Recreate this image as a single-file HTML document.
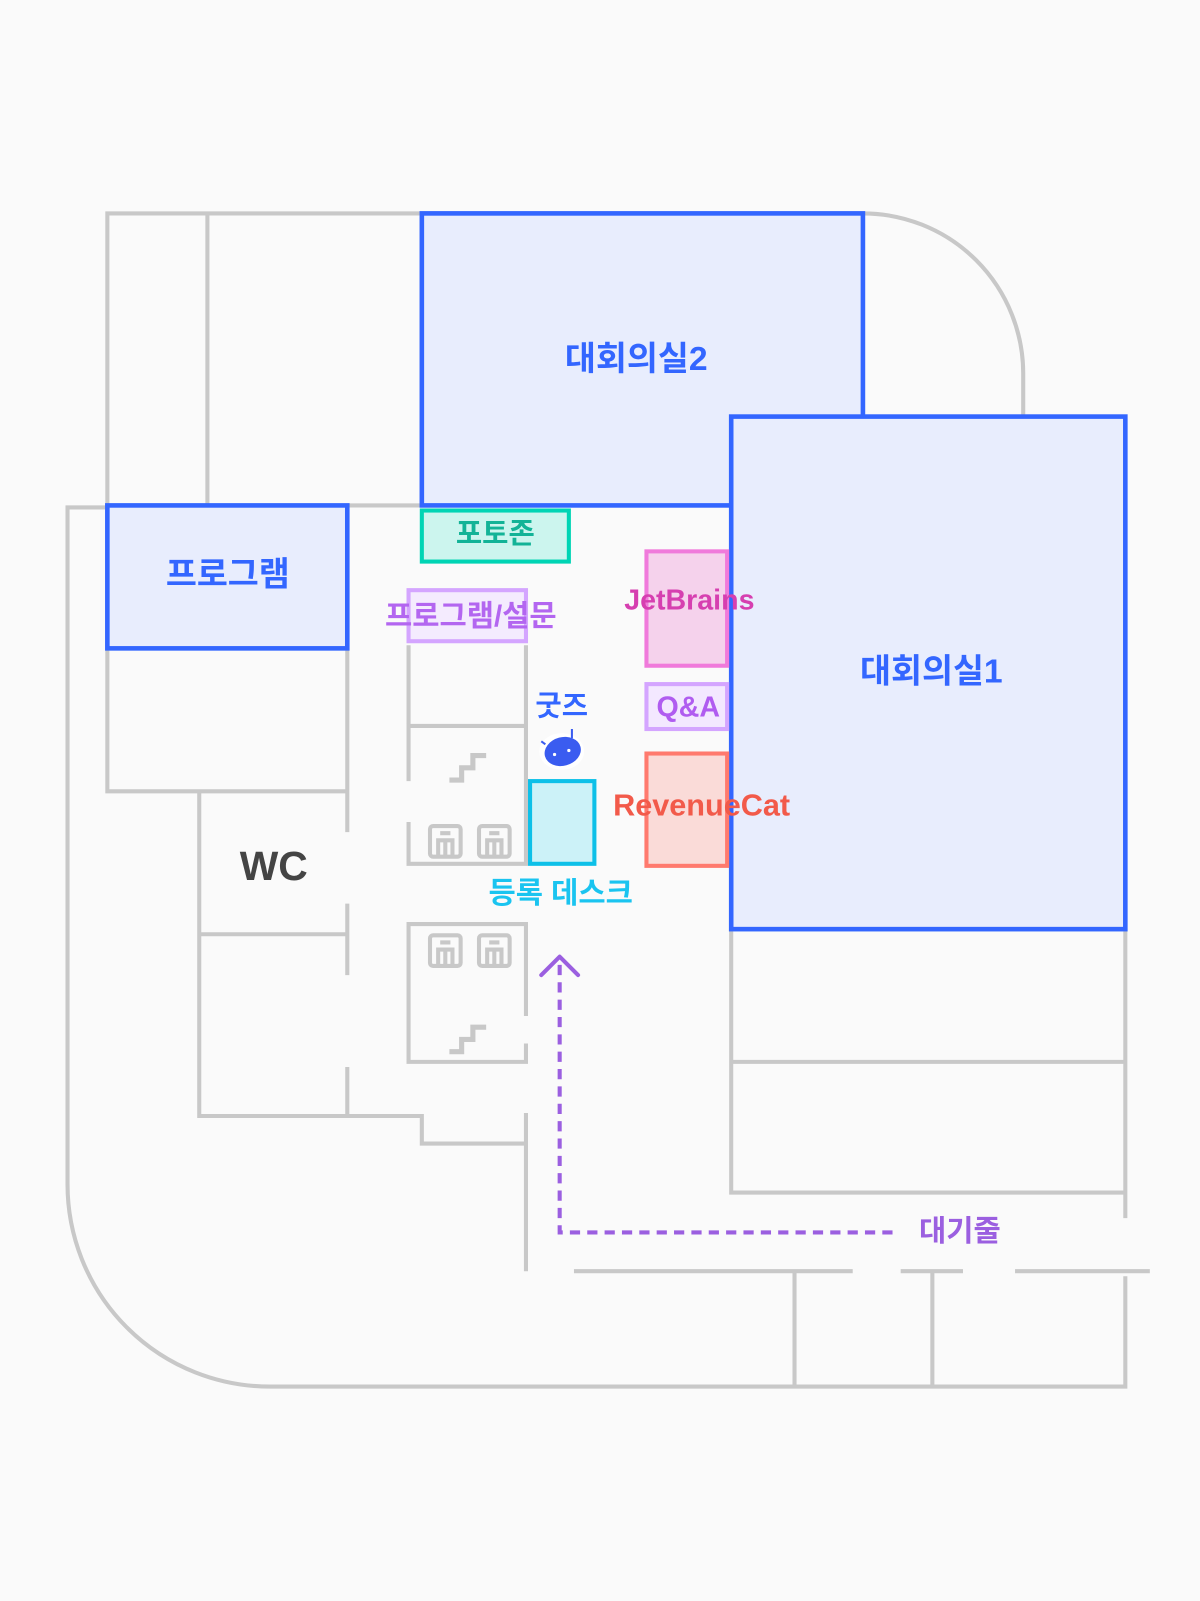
<!DOCTYPE html>
<html><head><meta charset="utf-8"><style>
html,body{margin:0;padding:0;background:#FAFAFA;}
svg{display:block}
text{font-family:"Liberation Sans","Noto Sans CJK KR",sans-serif;font-weight:bold;text-anchor:middle;dominant-baseline:central}
</style></head><body>
<svg width="1200" height="1601" viewBox="0 0 1175 1568" xmlns="http://www.w3.org/2000/svg">
<rect width="1175" height="1568" fill="#FAFAFA"/>
<g fill="none" stroke="#C8C8C8" stroke-width="4">
<path d="M105 495 V209 H845 A157 157 0 0 1 1002 366 V408"/>
<path d="M203 209 V495"/>
<path d="M105 497 H66 V1160 A198 198 0 0 0 264 1358 H1102 V1250"/>
<path d="M340 495 H413"/>
<path d="M105 635 V775 H340"/>
<path d="M340 635 V815 M340 885 V955 M340 1045 V1093"/>
<path d="M195 775 V1093 H413 V1120 H515 M195 915 H340"/>
<path d="M515 1090 V1245"/>
<path d="M400 632 V765 M400 805 V846 H515 V632 M400 711 H515"/>
<path d="M515 995 V905 H400 V1040 H515 V1022"/>
<path d="M716 910 V1168 H1102 M716 1040 H1102 M1102 910 V1193"/>
<path d="M562 1245 H835 M882 1245 H943 M994 1245 H1126"/>
<path d="M778 1245 V1358 M913 1245 V1358"/>
<path d="M440 764 H452 V752 H463 V740 H476" stroke-width="5"/>
<path d="M440 1030 H452 V1018 H463 V1006 H476" stroke-width="5"/>
</g>
<g fill="none" stroke="#C8C8C8" stroke-width="4">
<g id="el"><rect x="421" y="809" width="30" height="30" rx="3"/><path d="M429 839 V823 H443 V839 M436 823 V839 M431 816 H441"/></g>
<use href="#el" x="48"/>
<use href="#el" x="0" y="107"/>
<use href="#el" x="48" y="107"/>
</g>
<rect x="413" y="209" width="432" height="286" fill="#E8EDFD" stroke="#3366FF" stroke-width="4.5"/>
<rect x="716" y="408" width="386" height="502" fill="#E8EDFD" stroke="#3366FF" stroke-width="4.5"/>
<rect x="105" y="495" width="235" height="140" fill="#E8EDFD" stroke="#3366FF" stroke-width="4.5"/>
<rect x="413" y="500" width="144" height="50" fill="#CCF5EE" stroke="#00D4B4" stroke-width="4"/>
<rect x="400" y="578" width="115" height="50" fill="#F4EBFE" stroke="#D4A5FF" stroke-width="4"/>
<rect x="633" y="540" width="79" height="112" fill="#F5D2EC" stroke="#F07ADB" stroke-width="4"/>
<rect x="633" y="670" width="79" height="44" fill="#F3E8FF" stroke="#D4A5FF" stroke-width="4"/>
<rect x="633" y="738" width="79" height="110" fill="#FADBD8" stroke="#FF7A6E" stroke-width="4"/>
<rect x="519" y="765" width="63" height="81" fill="#CCF2F8" stroke="#0DC0E8" stroke-width="4"/>
<g fill="none" stroke="#9B5FE0" stroke-width="4">
<path d="M548 945 V1207 H880" stroke-dasharray="10 7"/>
<path d="M530 955 L548 937 L566 955" stroke-linecap="round" stroke-linejoin="round"/>
</g>
<ellipse cx="550" cy="736" rx="22" ry="18" fill="#fff" opacity="0.9"/>
<ellipse cx="551" cy="736" rx="18" ry="14" fill="#3A5CF0" transform="rotate(-15 551 736)"/>
<path d="M560 723 V714 M534 729 L530 726" stroke="#3A5CF0" stroke-width="2"/>
<circle cx="543" cy="739" r="1.6" fill="#fff"/><circle cx="557" cy="735" r="1.6" fill="#fff"/>
<text x="623" y="352" font-size="33" fill="#3366FF">대회의실2</text>
<text x="912" y="658" font-size="33" fill="#3366FF">대회의실1</text>
<text x="223" y="563" font-size="33" fill="#3366FF">프로그램</text>
<text x="485" y="523" font-size="28" fill="#13B397">포토존</text>
<text x="461" y="604" font-size="29" fill="#B366F0">프로그램/설문</text>
<text x="675" y="588" font-size="28" fill="#D63FB0">JetBrains</text>
<text x="674" y="693" font-size="28" fill="#B05CF0">Q&amp;A</text>
<text x="687" y="789" font-size="30" fill="#F25A4A">RevenueCat</text>
<text x="550" y="692" font-size="28" fill="#3366FF">굿즈</text>
<text x="549" y="875" font-size="29" fill="#1AC4F0">등록 데스크</text>
<text x="268" y="848" font-size="40" fill="#444444">WC</text>
<text x="940" y="1206" font-size="29" fill="#9B5FE0" font-weight="normal">대기줄</text>
</svg>
</body></html>
